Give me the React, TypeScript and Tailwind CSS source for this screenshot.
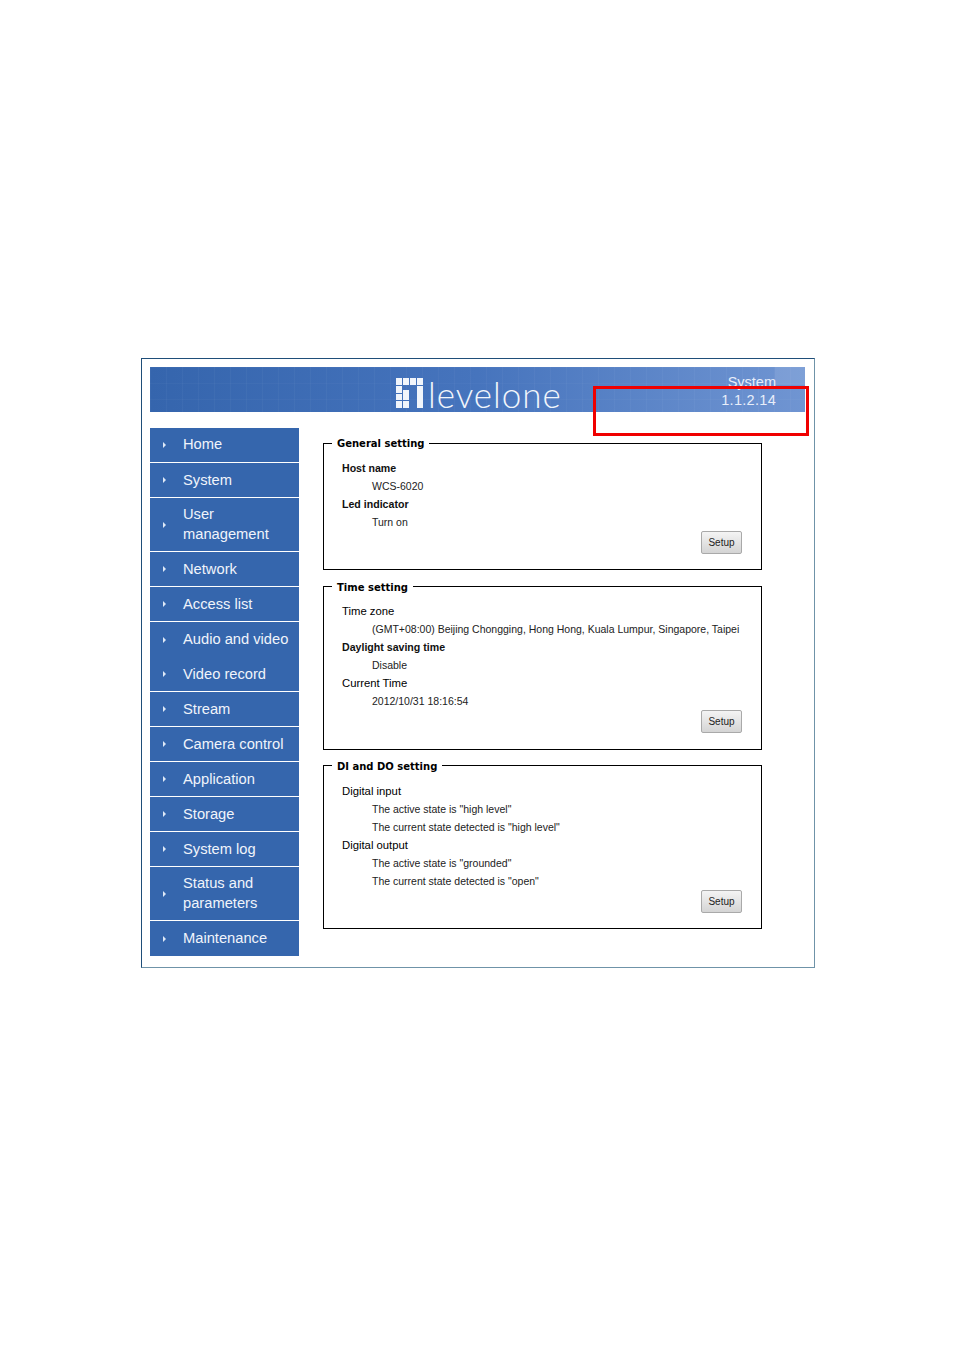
const menu: { label: string[]; noLine?: boolean; up?: boolean }[] = [
  { label: ["Home"], up: true },
  { label: ["System"] },
  { label: ["User", "management"], up: true },
  { label: ["Network"] },
  { label: ["Access list"] },
  { label: ["Audio and video"], noLine: true, up: true },
  { label: ["Video record"] },
  { label: ["Stream"] },
  { label: ["Camera control"] },
  { label: ["Application"] },
  { label: ["Storage"] },
  { label: ["System log"] },
  { label: ["Status and", "parameters"], up: true },
  { label: ["Maintenance"], up: true },
];

const Logo = () => (
  <svg width="27" height="30" viewBox="0 0 27 30" fill="#f1f5fb">
    <rect x="0" y="0" width="6" height="7" />
    <rect x="7" y="0" width="6" height="7" />
    <rect x="14" y="0" width="6" height="7" />
    <rect x="21" y="0" width="6" height="7" />
    <rect x="0" y="8" width="6" height="7" />
    <rect x="0" y="16" width="6" height="6" />
    <rect x="7" y="12" width="6" height="10" />
    <rect x="0" y="23" width="6" height="7" />
    <rect x="7" y="23" width="6" height="7" />
    <rect x="21" y="8" width="6" height="22" />
  </svg>
);

const Arrow = () => (
  <svg width="3" height="6" viewBox="0 0 3 6" fill="#dfe9f7">
    <path d="M0 0 L3 3 L0 6 Z" />
  </svg>
);

const Group = ({
  title,
  height,
  legend,
  body,
  foot,
  rows,
}: {
  title: string;
  height: string;
  legend: string;
  body: string;
  foot: string;
  rows: { head: string; bold?: boolean; values: string[] }[];
}) => (
  <fieldset className={`border border-black pl-[18px] pr-[19px] ${height} flex flex-col`}>
    <legend className={`relative ${legend} -ml-[10px] px-[5px] text-[10px] leading-[14px] font-bold font-['DejaVu_Sans',sans-serif] text-black`}>
      {title}
    </legend>
    <div className={`${body} leading-[18px] text-[#222]`}>
      {rows.map((r) => (
        <div key={r.head}>
          <div className={r.bold ? "text-[10.6px] font-bold text-[#111]" : "text-[11.3px] text-black"}>{r.head}</div>
          {r.values.map((v) => (
            <div key={v} className="h-[18px] pl-[30px] text-[10.5px] whitespace-nowrap">
              {v}
            </div>
          ))}
        </div>
      ))}
    </div>
    <div className={`mt-auto ${foot} flex justify-end`}>
      <button className="w-[41px] h-[23px] rounded-[2px] border border-[#a9a9a9] bg-gradient-to-b from-[#f4f4f4] to-[#d4d4d4] text-[10px] text-[#222]">
        Setup
      </button>
    </div>
  </fieldset>
);

export default function App() {
  return (
    <div className="min-h-[1351px] bg-white pt-[358px] pl-[141px] font-['Liberation_Sans',Arial,sans-serif]">
      <div className="relative w-[674px] h-[610px] border border-[#6f93a8] border-t-[#1f4e79] border-l-[#1f4e79] pt-[8px] pl-[8px] pr-[9px]">
        {/* Banner */}
        <div className="relative h-[45px] flex items-center bg-[linear-gradient(rgba(255,255,255,0.025)_1px,transparent_1px),linear-gradient(90deg,rgba(255,255,255,0.03)_1px,transparent_1px),linear-gradient(90deg,#3565ad,#4674bd_50%,#7095d2)] bg-[length:16px_16px,16px_16px,100%_100%] text-white">
          <div className="absolute right-0 top-0 w-[30px] h-[18px] bg-white/10" />
          <div className="ml-[246px] mt-[7px]">
            <Logo />
          </div>
          <div className="ml-[5px] mt-[9px] text-[35px] leading-[45px] font-light tracking-[1px] font-['Lato',sans-serif] text-[#f1f5fb]">
            levelone
          </div>
          <div className="relative ml-auto mr-[29px] mt-[3px] text-right text-[14.5px] leading-[18px] text-[#e8eefa]">
            <div>System</div>
            <div className="tracking-[0.3px]">1.1.2.14</div>
          </div>
        </div>

        <div className="mt-[16px] flex">
          {/* Sidebar */}
          <nav className="w-[149px] shrink-0 bg-[#3566ad] text-[#f0f4fb] text-[14.7px] leading-[20px]">
            {menu.map((m, i) => (
              <div
                key={m.label[0]}
                className={`flex items-center ${m.label.length > 1 ? "h-[54px]" : "h-[35px]"} ${
                  i < menu.length - 1 && !m.noLine ? "border-b border-white" : ""
                }`}
              >
                <span className="ml-[13px] w-[20px]">
                  <Arrow />
                </span>
                <span className={m.up ? "-mt-[2px]" : ""}>
                  {m.label.map((l) => (
                    <div key={l}>{l}</div>
                  ))}
                </span>
              </div>
            ))}
          </nav>

          {/* Settings */}
          <div className="ml-[24px] w-[439px] flex flex-col gap-[9px] mt-[8px]">
            <Group
              title="General setting"
              height="h-[134px]"
              legend="top-[1px]"
              body="mt-[9px]"
              foot="mb-[15px]"
              rows={[
                { head: "Host name", bold: true, values: ["WCS-6020"] },
                { head: "Led indicator", bold: true, values: ["Turn on"] },
              ]}
            />
            <Group
              title="Time setting"
              height="h-[171px]"
              legend="top-[2px]"
              body="mt-[9px]"
              foot="mb-[15px]"
              rows={[
                { head: "Time zone", values: ["(GMT+08:00) Beijing Chongging, Hong Hong, Kuala Lumpur, Singapore, Taipei"] },
                { head: "Daylight saving time", bold: true, values: ["Disable"] },
                { head: "Current Time", values: ["2012/10/31 18:16:54"] },
              ]}
            />
            <Group
              title="DI and DO setting"
              height="h-[171px] -mt-[1px]"
              legend="top-[2px]"
              body="mt-[10px]"
              foot="mb-[15px]"
              rows={[
                { head: "Digital input", values: ['The active state is "high level"', 'The current state detected is "high level"'] },
                { head: "Digital output", values: ['The active state is "grounded"', 'The current state detected is "open"'] },
              ]}
            />
          </div>
        </div>

        {/* Annotation box */}
        <div className="absolute left-[451px] top-[27px] w-[216px] h-[50px] border-[3px] border-[#f00000]" />
      </div>
    </div>
  );
}
